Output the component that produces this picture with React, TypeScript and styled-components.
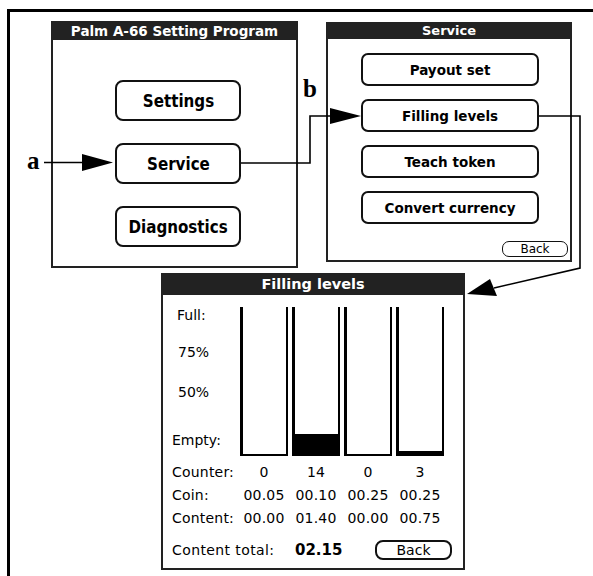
import styled, { createGlobalStyle } from "styled-components";

const GlobalStyle = createGlobalStyle`
  html, body {
    margin: 0;
    padding: 0;
    background: #fff;
    overflow: hidden;
  }
  body {
    font-family: "DejaVu Sans", "Liberation Sans", sans-serif;
    color: #000;
  }
`;

const bins = [
    { counter: 0, coin: "00.05", content: "00.00" },
    { counter: 14, coin: "00.10", content: "01.40" },
    { counter: 0, coin: "00.25", content: "00.00" },
    { counter: 3, coin: "00.25", content: "00.75" },
];

const CAPACITY = 100;
const BAR_INNER = 147;

const App = () => {
    return (
        <Page>
            <GlobalStyle />
            <Frame>
                <TopRow>
                    <Window $w={247} $h={247}>
                        <TitleBar $h={17} $size={13.5}>
                            Palm A-66 Setting Program
                        </TitleBar>
                        <MainMenu>
                            <MenuButton><Narrow>Settings</Narrow></MenuButton>
                            <MenuButton><Narrow>Service</Narrow></MenuButton>
                            <MenuButton><Narrow>Diagnostics</Narrow></MenuButton>
                        </MainMenu>
                    </Window>
                    <Window $w={246} $h={240} $top={1}>
                        <TitleBar $h={15} $size={13}>
                            Service
                        </TitleBar>
                        <ServiceMenu>
                            <ServiceButton>Payout set</ServiceButton>
                            <ServiceButton>Filling levels</ServiceButton>
                            <ServiceButton>Teach token</ServiceButton>
                            <ServiceButton>Convert currency</ServiceButton>
                            <SmallBack>Back</SmallBack>
                        </ServiceMenu>
                    </Window>
                </TopRow>
                <BottomRow>
                    <Window $w={304} $h={297}>
                        <TitleBar $h={20} $size={14.5}>
                            Filling levels
                        </TitleBar>
                        <Chart>
                            <Scale>
                                <ScaleLabel $gap={0} $indent={5}>Full:</ScaleLabel>
                                <ScaleLabel $gap={21} $indent={6}>75%</ScaleLabel>
                                <ScaleLabel $gap={24} $indent={6}>50%</ScaleLabel>
                                <ScaleLabel $gap={32} $indent={0}>Empty:</ScaleLabel>
                            </Scale>
                            {bins.map((b, i) => (
                                <Bar key={i}>
                                    <Fill
                                        style={{
                                            height: Math.max(
                                                0,
                                                Math.round((b.counter / CAPACITY) * BAR_INNER) - 1
                                            ),
                                        }}
                                    />
                                </Bar>
                            ))}
                        </Chart>
                        <Table>
                            <RowLabel>Counter:</RowLabel>
                            {bins.map((b, i) => (
                                <Cell key={"c" + i}>{b.counter}</Cell>
                            ))}
                            <RowLabel>Coin:</RowLabel>
                            {bins.map((b, i) => (
                                <Cell key={"m" + i}>{b.coin}</Cell>
                            ))}
                            <RowLabel>Content:</RowLabel>
                            {bins.map((b, i) => (
                                <Cell key={"t" + i}>{b.content}</Cell>
                            ))}
                        </Table>
                        <TotalRow>
                            <TotalLabel>Content total:</TotalLabel>
                            <TotalValue>02.15</TotalValue>
                            <BackButton>Back</BackButton>
                        </TotalRow>
                    </Window>
                </BottomRow>
            </Frame>

            <Connectors width="593" height="576" viewBox="0 0 593 576">
                <Letter x="27" y="169">a</Letter>
                <line x1="44" y1="162.5" x2="84" y2="162.5" stroke="#000" strokeWidth="1.4" />
                <polygon points="82,154 113,162.5 82,171" fill="#000" />

                <polyline
                    points="241,163 310,163 310,116 332,116"
                    fill="none"
                    stroke="#000"
                    strokeWidth="1.6"
                />
                <polygon points="330,108 361,116 330,124" fill="#000" />
                <Letter x="303" y="97">b</Letter>

                <polyline
                    points="539,116 580,116 580,268 494,288"
                    fill="none"
                    stroke="#000"
                    strokeWidth="1.6"
                />
                <polygon points="467,294 490,279 497,296" fill="#000" />
            </Connectors>
        </Page>
    );
};

export default App;

const Page = styled.div`
    position: relative;
    width: 593px;
    height: 576px;
    overflow: hidden;
`;

const Frame = styled.div`
    margin: 9px 0 0 7px;
    border-left: 3px solid #000;
    border-top: 3px solid #000;
    height: 700px;
    box-sizing: border-box;
`;

const TopRow = styled.div`
    display: flex;
    align-items: flex-start;
    gap: 28px;
    padding: 9px 0 0 41px;
`;

const BottomRow = styled.div`
    display: flex;
    padding-left: 151px;
    margin-top: 5px;
`;

const Window = styled.div<{ $w: number; $h: number; $top?: number }>`
    box-sizing: border-box;
    width: ${(p) => p.$w}px;
    height: ${(p) => p.$h}px;
    margin-top: ${(p) => p.$top ?? 0}px;
    border: 2px solid #222;
    background: #fff;
    display: flex;
    flex-direction: column;
`;

const TitleBar = styled.div<{ $h: number; $size: number }>`
    flex: none;
    height: ${(p) => p.$h}px;
    line-height: ${(p) => p.$h - 1}px;
    background: #222;
    color: #fff;
    text-align: center;
    font-family: "DejaVu Sans", sans-serif;
    font-weight: bold;
    font-size: ${(p) => p.$size}px;
    white-space: nowrap;
`;

const MainMenu = styled.div`
    display: flex;
    flex-direction: column;
    align-items: flex-start;
    gap: 22px;
    padding: 40px 0 0 62px;
`;

const MenuButton = styled.div`
    box-sizing: border-box;
    width: 126px;
    height: 41px;
    border: 2px solid #111;
    border-radius: 8px;
    display: flex;
    align-items: center;
    justify-content: center;
    font-weight: bold;
    font-size: 18px;
`;

const Narrow = styled.span`
    display: inline-block;
    transform: scaleX(0.84);
    white-space: nowrap;
`;

const ServiceMenu = styled.div`
    flex: 1;
    display: flex;
    flex-direction: column;
    align-items: flex-start;
    gap: 13px;
    padding: 14px 0 0 33px;
`;

const ServiceButton = styled.div`
    box-sizing: border-box;
    width: 178px;
    height: 33px;
    border: 2px solid #111;
    border-radius: 7px;
    display: flex;
    align-items: center;
    justify-content: center;
    font-weight: bold;
    font-size: 13.5px;
    white-space: nowrap;
`;

const SmallBack = styled.div`
    box-sizing: border-box;
    align-self: flex-end;
    margin: auto 2px 3px 0;
    width: 66px;
    height: 16px;
    border: 1.5px solid #111;
    border-radius: 7px;
    display: flex;
    align-items: center;
    justify-content: center;
    font-size: 12px;
`;

const Chart = styled.div`
    display: grid;
    grid-template-columns: 64px repeat(4, 48px);
    column-gap: 4px;
    padding: 12px 0 0 9px;
    height: 149px;
`;

const Scale = styled.div`
    display: flex;
    flex-direction: column;
    font-size: 14px;
`;

const ScaleLabel = styled.div<{ $gap: number; $indent: number }>`
    height: 16px;
    line-height: 16px;
    margin-top: ${(p) => p.$gap}px;
    padding-left: ${(p) => p.$indent}px;
    white-space: nowrap;
`;

const Bar = styled.div`
    box-sizing: border-box;
    height: 149px;
    border-left: 3px solid #000;
    border-right: 2px solid #000;
    border-bottom: 2px solid #000;
    display: flex;
    flex-direction: column;
    justify-content: flex-end;
`;

const Fill = styled.div`
    background: #000;
`;

const Table = styled.div`
    display: grid;
    grid-template-columns: 64px repeat(4, 48px);
    grid-auto-rows: 23px;
    column-gap: 4px;
    padding-left: 9px;
    margin-top: 4px;
    font-size: 14px;
    letter-spacing: 0.2px;
    align-items: center;
`;

const RowLabel = styled.div`
    white-space: nowrap;
`;

const Cell = styled.div`
    text-align: center;
    white-space: nowrap;
`;

const TotalRow = styled.div`
    display: flex;
    align-items: center;
    padding: 0 11px 0 9px;
    margin-top: 11px;
    height: 20px;
`;

const TotalLabel = styled.div`
    width: 123px;
    font-size: 14px;
    letter-spacing: 0.4px;
    white-space: nowrap;
`;

const TotalValue = styled.div`
    font-weight: bold;
    font-size: 15px;
`;

const BackButton = styled.div`
    box-sizing: border-box;
    margin-left: auto;
    width: 77px;
    height: 20px;
    border: 2px solid #111;
    border-radius: 8px;
    display: flex;
    align-items: center;
    justify-content: center;
    font-size: 14px;
`;

const Connectors = styled.svg`
    position: absolute;
    left: 0;
    top: 0;
    pointer-events: none;
`;

const Letter = styled.text`
    font-family: "Liberation Serif", "DejaVu Serif", serif;
    font-weight: bold;
    font-size: 25px;
    fill: #000;
`;
